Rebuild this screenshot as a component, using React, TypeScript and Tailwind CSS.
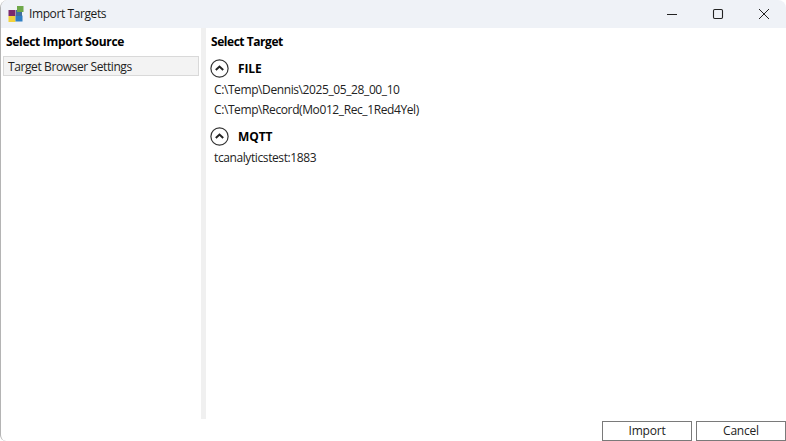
import React from "react";

function Chevron() {
  return (
    <svg width="19" height="19" viewBox="0 0 19 19" className="shrink-0">
      <circle cx="9.5" cy="9.5" r="8.6" fill="none" stroke="#333333" strokeWidth="1.2" />
      <path d="M5.8 11 L9.5 7.6 L13.2 11" fill="none" stroke="#222222" strokeWidth="2" />
    </svg>
  );
}

function Group({ name, items }: { name: string; items: string[] }) {
  return (
    <div className="flex flex-col pb-[6px]">
      <div className="flex items-center h-[22px] pl-[4px] gap-[9px]">
        <Chevron />
        <span className="mt-[2px] text-[12px] leading-[20px] font-bold text-black tracking-[-0.1px]">{name}</span>
      </div>
      <div className="flex flex-col">
        {items.map((t) => (
          <div key={t} className="h-[20px] leading-[22px] pl-[8px] text-[12px] text-[#222222] tracking-[-0.4px]">
            {t}
          </div>
        ))}
      </div>
    </div>
  );
}

export default function App() {
  return (
    <div
      className="w-[786px] h-[441px] overflow-hidden bg-white flex flex-col rounded-t-[8px] border-l border-[#b4b4b4] rounded-bl-[6px]"
      style={{ fontFamily: '"Open Sans", "Noto Sans", sans-serif' }}
    >
      <div className="h-[28px] bg-[#eff2f7] flex items-center shrink-0">
        <svg width="16" height="16" viewBox="0 0 16 16" className="ml-[7px]">
          <rect x="0.5" y="4" width="7" height="6" fill="#7b2a6e" />
          <rect x="0.5" y="10" width="7" height="6" fill="#f2d23c" />
          <rect x="7.5" y="9.5" width="7" height="6" fill="#2f7fc4" />
          <rect x="8" y="4" width="6" height="6" fill="#3f6f9f" />
          <rect x="9" y="0" width="6.5" height="6" fill="#6fa84a" />
        </svg>
        <span className="ml-[5px] text-[12px] leading-[30px] text-[#1a1a1a] tracking-[-0.4px]">Import Targets</span>
        <div className="ml-auto flex items-center">
          <svg width="46" height="28" viewBox="0 0 46 28">
            <path d="M19 14.5 H29" stroke="#222" strokeWidth="1" />
          </svg>
          <svg width="46" height="28" viewBox="0 0 46 28">
            <rect x="19.5" y="9.5" width="9" height="9" rx="1.2" fill="none" stroke="#222" strokeWidth="1.1" />
          </svg>
          <svg width="46" height="28" viewBox="0 0 46 28">
            <path d="M19 9 L29 19 M29 9 L19 19" stroke="#222" strokeWidth="1" />
          </svg>
        </div>
      </div>
      <div className="flex h-[391px] shrink-0">
        <div className="w-[200px] flex flex-col shrink-0 pl-[2px] pr-[2px]">
          <div className="h-[28px] leading-[28px] pl-[3px] text-[12px] font-bold text-black tracking-[-0.3px]">Select Import Source</div>
          <div className="h-[20px] leading-[20px] border border-[#d9d9d9] bg-[#f3f3f3] pl-[4px] text-[12px] text-[#222222] tracking-[-0.4px]">
            Target Browser Settings
          </div>
        </div>
        <div className="w-[5px] bg-[#f0f0f0] shrink-0" />
        <div className="flex-1 flex flex-col">
          <div className="h-[28px] leading-[28px] pl-[5px] text-[12px] font-bold text-black tracking-[-0.45px] mb-[1px]">Select Target</div>
          <Group name="FILE" items={["C:\\Temp\\Dennis\\2025_05_28_00_10", "C:\\Temp\\Record(Mo012_Rec_1Red4Yel)"]} />
          <Group name="MQTT" items={["tcanalyticstest:1883"]} />
        </div>
      </div>
      <div className="flex-1 flex items-end justify-end gap-[4px]">
        <button className="w-[90px] h-[20px] border border-[#7a7a7a] bg-white text-[12px] text-[#222222] tracking-[-0.2px]">Import</button>
        <button className="w-[90px] h-[20px] border border-[#7a7a7a] bg-white text-[12px] text-[#222222] tracking-[-0.2px]">Cancel</button>
      </div>
    </div>
  );
}
